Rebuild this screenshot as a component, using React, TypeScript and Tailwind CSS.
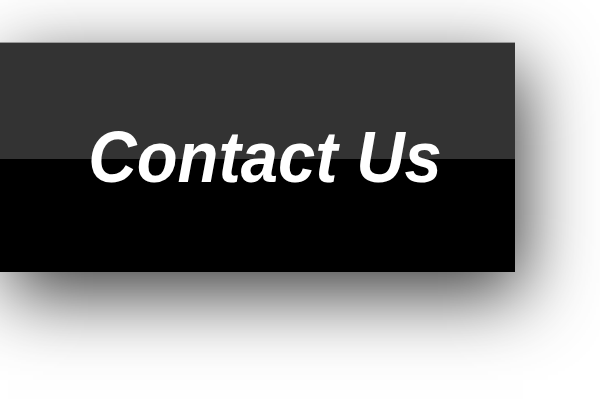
export default function App() {
  return (
    <div className="w-[600px] h-[400px] bg-white overflow-hidden pt-[42px]">
      <div className="relative w-[515px] h-[230px] shadow-[8px_23px_70px_rgba(0,0,0,0.76)]">
        <div className="flex flex-col h-full">
          <div className="h-[117px] bg-[#333333] border-t border-[#9a9a9a]" />
          <div className="flex-1 bg-black" />
        </div>
        <div className="absolute inset-0 flex items-center justify-center pl-[16px]">
          <span
            className="text-white font-bold italic text-[72px] leading-none scale-x-[0.93]"
            style={{ fontFamily: '"Liberation Sans", Arial, sans-serif' }}
          >
            Contact Us
          </span>
        </div>
      </div>
    </div>
  )
}
